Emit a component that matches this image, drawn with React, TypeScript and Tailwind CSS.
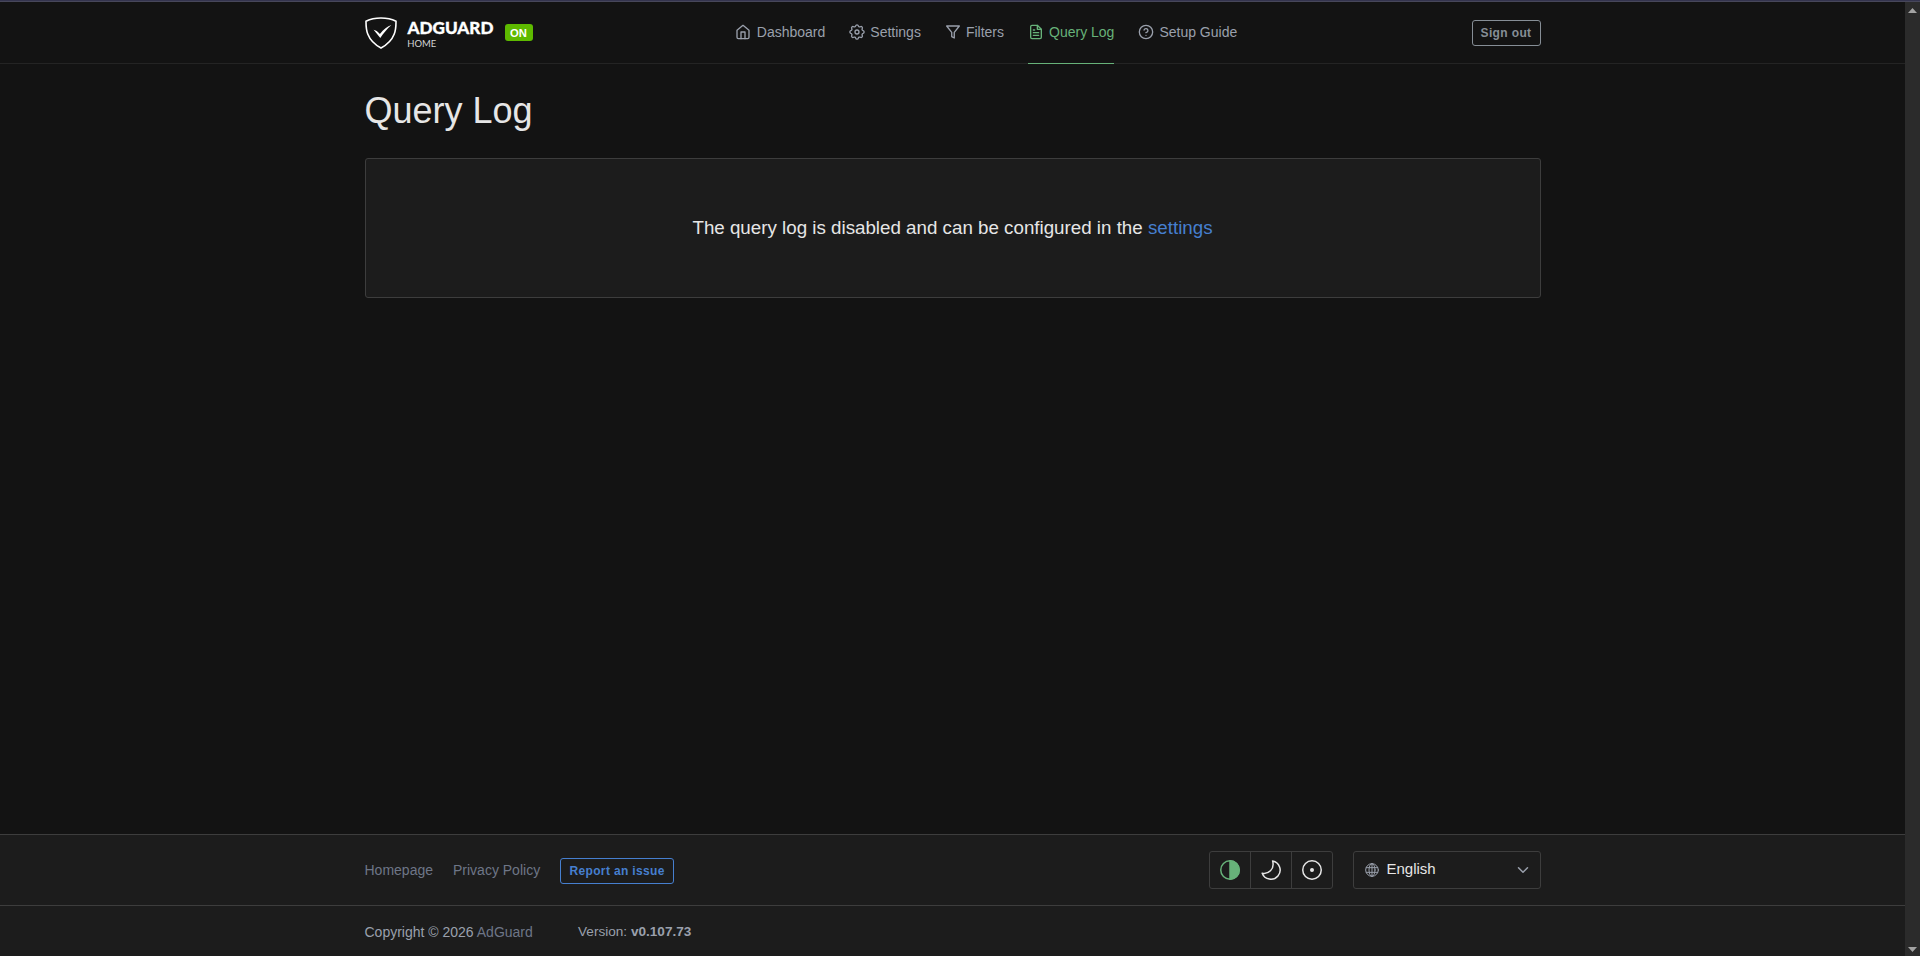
import type { ReactNode } from 'react';

type NavItem = {
  label: string;
  icon: ReactNode;
  active?: boolean;
};

type IconProps = {
  children: ReactNode;
  className?: string;
  strokeWidth?: number;
};

const Icon = ({ children, className = 'size-4', strokeWidth = 2 }: IconProps) => (
  <svg
    className={`shrink-0 ${className}`}
    viewBox="0 0 24 24"
    fill="none"
    stroke="currentColor"
    strokeWidth={strokeWidth}
    strokeLinecap="round"
    strokeLinejoin="round"
  >
    {children}
  </svg>
);

const NAV_ITEMS: NavItem[] = [
  {
    label: 'Dashboard',
    icon: (
      <Icon>
        <path d="M3 9.5 12 2l9 7.500V20a2 2 0 0 1-2 2H5a2 2 0 0 1-2-2z" />
        <path d="M9 22V12h6v10" />
      </Icon>
    ),
  },
  {
    label: 'Settings',
    icon: (
      <Icon>
        <path
          d="M10.3 4.1c.43-1.76 2.97-1.76 3.4 0a1.75 1.75 0 0 0 2.6 1.1c1.55-.94 3.34.85 2.4 2.4a1.75 1.75 0 0 0 1.1 2.6c1.8.5 1.8 3.1 0 3.6a1.75 1.75 0 0 0-1.1 2.6c.94 1.55-.85 3.34-2.4 2.4a1.75 1.75 0 0 0-2.6 1.1c-.43 1.76-2.97 1.76-3.4 0a1.75 1.75 0 0 0-2.6-1.1c-1.55.94-3.34-.85-2.4-2.4a1.75 1.75 0 0 0-1.1-2.6c-1.8-.5-1.8-3.1 0-3.6a1.75 1.75 0 0 0 1.1-2.6c-.94-1.55.85-3.34 2.4-2.4a1.75 1.75 0 0 0 2.6-1.1z"
          transform="translate(-2.040 -2.040) scale(1.170)"
          strokeWidth="1.700"
        />
        <circle cx="12" cy="12" r="3" />
      </Icon>
    ),
  },
  {
    label: 'Filters',
    icon: (
      <Icon>
        <path d="M21.500 3h-19l7.600 9.460V19l3.800 2v-8.540z" />
      </Icon>
    ),
  },
  {
    label: 'Query Log',
    active: true,
    icon: (
      <Icon>
        <path d="M14 2H6a2 2 0 0 0-2 2v16a2 2 0 0 0 2 2h12a2 2 0 0 0 2-2V8z" />
        <path d="M14 2v6h6M16 13H8M16 17H8M10 9H8" />
      </Icon>
    ),
  },
  {
    label: 'Setup Guide',
    icon: (
      <Icon>
        <circle cx="12" cy="12" r="10" />
        <path d="M9.1 9a3 3 0 0 1 5.83 1c0 2-3 3-3 3M12 17h.01" />
      </Icon>
    ),
  },
];

const Logo = () => (
  <svg className="mt-px h-8 w-[130px]" viewBox="0 0 130 32" fill="none">
    <path
      d="M16 1C10.5 1 5.3 2.1 1 4.2 1 10.5.6 23 16 31 31.4 23 31 10.5 31 4.2 26.7 2.1 21.5 1 16 1z"
      stroke="#fff"
      strokeWidth="1.6"
    />
    <path d="M8.6 12.8c1.6.1 4.6 1.9 6.3 4.3C18.500 11.900 22.500 9.500 26.400 8 22 11.800 18 17 15.300 21z" fill="#fff" />
    <text
      x="42.500"
      y="17.200"
      fill="#fff"
      stroke="#fff"
      strokeWidth="0.300"
      fontFamily="Lato, sans-serif"
      fontWeight="900"
      fontSize="16"
      textLength="86"
      lengthAdjust="spacingAndGlyphs"
    >
      ADGUARD
    </text>
    <text
      x="42.300"
      y="29.500"
      fill="#d4d4d4"
      fontFamily="Lato, sans-serif"
      fontSize="9.500"
      textLength="29"
      lengthAdjust="spacingAndGlyphs"
    >
      HOME
    </text>
  </svg>
);

const Header = () => (
  <header className="h-[62px] shrink-0 border-b border-[#242424]">
    <div className="mx-auto flex h-full w-[1176px] items-stretch">
      <a className="flex w-[371.300px] items-center">
        <Logo />
        <span className="ml-[10px] flex h-[17px] w-7 items-center justify-center rounded-[3px] bg-[#5eba00] pt-px text-[11.25px] font-bold text-white">
          ON
        </span>
      </a>
      <nav className="flex gap-6">
        {NAV_ITEMS.map((item) => (
          <a
            key={item.label}
            className={`-mb-px flex items-center border-b pb-px text-sm ${
              item.active ? 'border-[#67b279] text-[#67b279]' : 'border-transparent text-[#9aa0ac]'
            }`}
          >
            <span className="-ml-[0.400px] mr-[5.400px]">{item.icon}</span>
            <span className="pb-px">{item.label}</span>
          </a>
        ))}
      </nav>
      <button className="my-auto ml-auto flex h-[26px] w-[69px] items-center justify-center rounded-[3px] border border-[#868e96] text-xs font-bold tracking-[0.36px] text-[#868e96]">
        Sign out
      </button>
    </div>
  </header>
);

const ThemeSwitch = () => (
  <div className="flex h-[38px] w-[124px] divide-x divide-[#3d3d3d] rounded-[3px] border border-[#3d3d3d] text-[#e6e6e6]">
    <button className="flex flex-1 items-center justify-center text-[#67b279]">
      <Icon className="size-6" strokeWidth={1.5}>
        <circle cx="12" cy="12" r="9.25" />
        <path d="M12 2.750a9.250 9.250 0 0 1 0 18.500z" fill="currentColor" />
      </Icon>
    </button>
    <button className="flex flex-1 items-center justify-center">
      <Icon className="size-6" strokeWidth={1.5}>
        <path d="M13.600 2.900A9.250 9.250 0 1 1 3.200 15.200C9 16.400 16 11.500 13.600 2.900z" />
      </Icon>
    </button>
    <button className="flex flex-1 items-center justify-center">
      <Icon className="size-6" strokeWidth={1.5}>
        <circle cx="12" cy="12" r="9.25" />
        <circle cx="12" cy="12" r="1.25" fill="currentColor" />
      </Icon>
    </button>
  </div>
);

const LanguageSelect = () => (
  <button className="ml-5 flex h-[38px] w-[188px] items-center rounded-[3px] border border-[#3d3d3d] pr-2 pl-[10px] text-[15px] text-[#e6e6e6]">
    <Icon className="size-4 text-[#9aa0ac]" strokeWidth={1.5}>
      <circle cx="12" cy="12" r="9.500" />
      <ellipse cx="12" cy="12" rx="4.500" ry="9.500" />
      <path d="M3.500 8.500h17M3.500 15.500h17M12 2.500v19" />
    </Icon>
    <span className="ml-[7px] pb-0.5">English</span>
    <Icon className="ml-auto size-[18px] text-[#9aa0ac]">
      <path d="m6 9 6 6 6-6" />
    </Icon>
  </button>
);

const Footer = () => (
  <footer className="shrink-0 bg-[#1c1c1c] text-sm text-[#9aa0ac]">
    <div className="h-[72px] border-y border-[#3d3d3d]">
      <div className="mx-auto flex h-full w-[1176px] items-center">
        <a className="text-[#6e7687]">Homepage</a>
        <a className="ml-5 text-[#6e7687]">Privacy Policy</a>
        <a className="mt-px ml-5 flex h-[26px] w-[114px] items-center justify-center rounded-[3px] border border-[#467fcf] text-xs font-bold tracking-[0.36px] text-[#467fcf]">
          Report an issue
        </a>
        <div className="ml-auto flex">
          <ThemeSwitch />
          <LanguageSelect />
        </div>
      </div>
    </div>
    <div className="mx-auto flex h-[50px] w-[1176px] items-center">
      <div className="w-[213.500px] pt-px">
        Copyright © 2026 <a className="text-[#6e7687]">AdGuard</a>
      </div>
      <div className="pt-0.5 text-[13.6px]">
        Version: <strong>v0.107.73</strong>
      </div>
    </div>
  </footer>
);

const Scrollbar = () => (
  <div className="flex w-[15px] shrink-0 flex-col items-center justify-between bg-[#2b2b2b] pt-1.5 pb-1">
    <svg className="h-[5px] w-[9px]" viewBox="0 0 9 5" fill="#a3a3a3">
      <path d="M4.500 0 9 5H0z" />
    </svg>
    <svg className="h-[5px] w-[9px]" viewBox="0 0 9 5" fill="#a3a3a3">
      <path d="M4.500 5 9 0H0z" />
    </svg>
  </div>
);

const App = () => (
  <div className="flex h-[956px] flex-col overflow-hidden bg-[#131313] font-['Liberation_Sans',Arial,sans-serif]">
    <div className="h-0.5 shrink-0 border-b border-[#47475a] bg-[#34344e]" />
    <div className="flex min-h-0 flex-1">
      <div className="flex min-w-0 flex-1 flex-col">
        <Header />
        <main className="mx-auto w-[1176px] flex-1">
          <h1 className="pt-[27px] text-4xl leading-10 text-[#e6e6e6]">Query Log</h1>
          <div className="mt-[27px] flex h-[140px] items-center justify-center rounded-[3px] border border-[#3d3d3d] bg-[#1c1c1c] text-[18.75px] text-[#e6e6e6]">
            <p>
              The query log is disabled and can be configured in the <a className="text-[#467fcf]">settings</a>
            </p>
          </div>
        </main>
        <Footer />
      </div>
      <Scrollbar />
    </div>
  </div>
);

export default App;
